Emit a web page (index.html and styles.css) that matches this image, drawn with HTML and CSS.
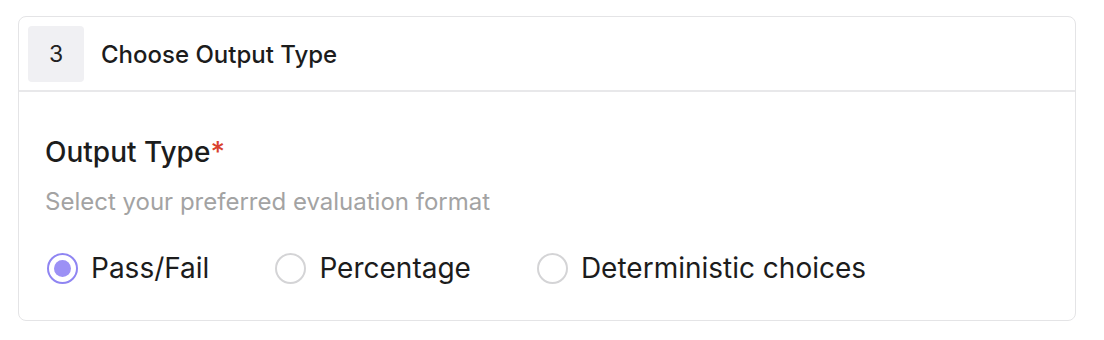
FILE: index.html
```html
<!DOCTYPE html>
<html>
<head>
<meta charset="utf-8">
<link rel="stylesheet" href="styles.css">
</head>
<body>
<div class="card">
  <div class="card-header">
    <div class="step">3</div>
    <div class="title">Choose Output Type</div>
  </div>
  <div class="card-body">
    <div class="label">Output Type<span class="req">*</span></div>
    <div class="hint">Select your preferred evaluation format</div>
    <div class="options">
      <label class="option"><span class="radio checked"><span class="dot"></span></span>Pass/Fail</label>
      <label class="option"><span class="radio"></span>Percentage</label>
      <label class="option"><span class="radio"></span>Deterministic choices</label>
    </div>
  </div>
</div>
</body>
</html>
```

FILE: styles.css
```css
* { box-sizing: border-box; }
body {
  margin: 0;
  padding: 16px 28px 0 18px;
  background: #fff;
  font-family: Inter, "Noto Sans", sans-serif;
  color: #1a1a1a;
}
.card {
  border: 1px solid #e4e4e6;
  border-radius: 8px;
  height: 305px;
}
.card-header {
  display: flex;
  align-items: center;
  gap: 17px;
  padding: 9px 9px 8px;
  border-bottom: 2px solid #e8e8ea;
}
.step {
  width: 56px;
  height: 56px;
  border-radius: 4px;
  background: #f0f0f3;
  display: flex;
  align-items: center;
  justify-content: center;
  font-size: 23px;
  color: #222;
}
.title {
  font-size: 24px;
  font-weight: 500;
  color: #1c1c1c;
}
.card-body {
  padding: 43px 26px 0;
}
.label {
  font-size: 28px;
  font-weight: 500;
  color: #1c1c1c;
  line-height: 34px;
}
.req { color: #d9412e; }
.hint {
  margin-top: 18px;
  font-size: 24px;
  color: #a3a3a3;
  line-height: 30px;
}
.options {
  display: flex;
  gap: 66px;
  margin-top: 34px;
  padding-left: 2px;
}
.option {
  display: flex;
  align-items: center;
  gap: 13px;
  font-size: 28px;
  color: #1c1c1c;
  line-height: 34px;
}
.radio {
  width: 31px;
  height: 31px;
  border-radius: 50%;
  border: 2px solid #d4d4d6;
  display: flex;
  align-items: center;
  justify-content: center;
}
.radio.checked { border-color: #8f85f2; }
.dot {
  width: 17px;
  height: 17px;
  border-radius: 50%;
  background: #9c91f5;
}
```
